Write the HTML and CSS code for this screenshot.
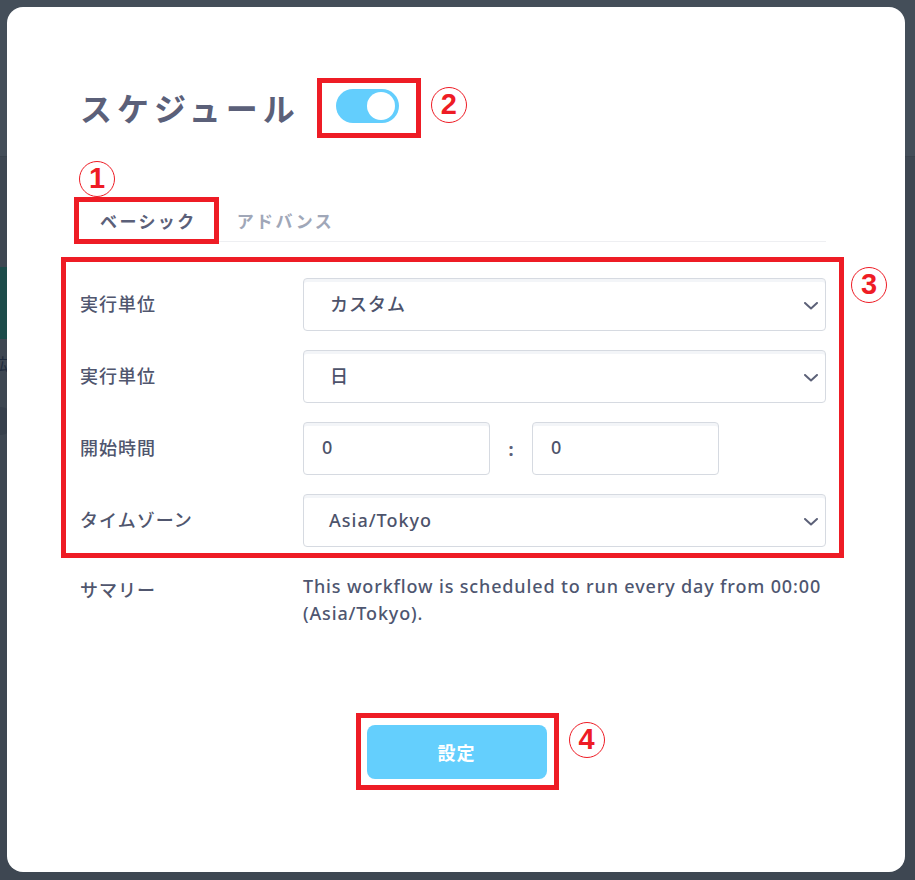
FILE: index.html
```html
<!DOCTYPE html>
<html lang="ja">
<head>
<meta charset="utf-8">
<title>スケジュール</title>
<link rel="stylesheet" href="styles.css">
</head>
<body>
<div class="page">
  <div class="page-header"></div>
  <div class="page-side">
    <div class="side-teal"></div>
    <div class="side-text">拡</div>
    <div class="side-dot"></div>
  </div>
</div>

<div class="modal">
  <div class="title-row">
    <h1 class="title">スケジュール</h1>
    <div class="toggle-mark">
      <div class="toggle"><span class="knob"></span></div>
      <span class="num num-2">2</span>
    </div>
  </div>

  <div class="tabs">
    <div class="tab active">ベーシック
      <span class="mark tab-mark"></span>
      <span class="num num-1">1</span>
    </div>
    <div class="tab">アドバンス</div>
  </div>

  <div class="form">
    <span class="mark form-mark"></span>
    <span class="num num-3">3</span>
    <div class="row">
      <div class="label">実行単位</div>
      <div class="select">カスタム<svg class="chev" viewBox="0 0 14 8"><path d="M1 1l6 5.5L13 1"/></svg></div>
    </div>
    <div class="row">
      <div class="label">実行単位</div>
      <div class="select">日<svg class="chev" viewBox="0 0 14 8"><path d="M1 1l6 5.5L13 1"/></svg></div>
    </div>
    <div class="row">
      <div class="label">開始時間</div>
      <div class="time">
        <div class="input">0</div>
        <span class="colon">:</span>
        <div class="input">0</div>
      </div>
    </div>
    <div class="row">
      <div class="label">タイムゾーン</div>
      <div class="select latin">Asia/Tokyo<svg class="chev" viewBox="0 0 14 8"><path d="M1 1l6 5.5L13 1"/></svg></div>
    </div>
  </div>

  <div class="summary">
    <div class="label summary-label">サマリー</div>
    <p class="summary-text">This workflow is scheduled to run every day from 00:00 (Asia/Tokyo).</p>
  </div>

  <div class="actions">
    <div class="btn-wrap">
      <button class="btn">設定</button>
      <span class="mark btn-mark"></span>
      <span class="num num-4">4</span>
    </div>
  </div>
</div>
</body>
</html>
```

FILE: styles.css
```css
* { box-sizing: border-box; }

html, body {
  margin: 0;
  padding: 0;
}

body {
  width: 915px;
  height: 880px;
  overflow: hidden;
  background: #3e4752;
  font-family: "Noto Sans", "Noto Sans CJK JP", sans-serif;
  position: relative;
}

/* backdrop page */
.page-header {
  height: 157px;
  background: #444e59;
  border-bottom: 1px solid #3a434d;
}
.page-side {
  display: flex;
  flex-direction: column;
  width: 20px;
}
.side-teal {
  margin-top: 110px;
  height: 72px;
  background: #1c4b4a;
  border-radius: 0 6px 6px 0;
}
.side-text {
  margin-top: 14px;
  margin-left: -8px;
  font-size: 16px;
  font-family: "Noto Sans CJK JP", sans-serif;
  color: #1e2a3c;
  line-height: 20px;
}
.side-dot {
  margin-top: 34px;
  margin-left: -14px;
  width: 28px;
  height: 28px;
  border-radius: 50%;
  background: #37404c;
}

/* modal */
.modal {
  position: absolute;
  top: 7px;
  left: 7px;
  width: 898px;
  height: 865px;
  background: #fff;
  border-radius: 16px;
  padding: 71px 79px 0 73px;
}

.title-row {
  display: flex;
  align-items: center;
  height: 60px;
}
.title {
  margin: 0;
  font-family: "Noto Sans CJK JP", sans-serif;
  font-size: 32px;
  font-weight: 700;
  letter-spacing: 5px;
  color: #5b6079;
  line-height: 40px;
  margin-top: -3px;
}
.toggle-mark {
  position: relative;
  flex: none;
  margin-left: 17px;
  width: 104px;
  height: 60px;
  border: 5px solid #ee1c25;
  padding: 6px 0 0 14px;
}
.toggle {
  width: 63px;
  height: 34px;
  border-radius: 17px;
  background: #63cefd;
  position: relative;
}
.knob {
  position: absolute;
  right: 4px;
  top: 3px;
  width: 28px;
  height: 28px;
  border-radius: 50%;
  background: #fff;
}

/* circled numbers */
.num {
  position: absolute;
  width: 36px;
  height: 36px;
  border: 1.5px solid #ee1c25;
  border-radius: 50%;
  color: #ee1c25;
  font-family: "Liberation Sans", sans-serif;
  font-weight: 700;
  font-size: 29px;
  line-height: 33px;
  text-align: center;
  letter-spacing: 0;
}
.num-2 { left: 109px; top: 4px; }
.num-1 { left: -1px; top: -41px; }
.num-3 { right: -61px; top: -11px; }
.num-4 { left: 202px; top: -3px; }

.mark {
  position: absolute;
  border: 5px solid #ee1c25;
  pointer-events: none;
}

/* tabs */
.tabs {
  display: flex;
  margin-top: 64px;
  border-bottom: 1px solid #eeeff2;
}
.tab {
  position: relative;
  padding: 9px 20px 10px;
  font-family: "Noto Sans CJK JP", sans-serif;
  font-size: 17px;
  font-weight: 700;
  letter-spacing: 2.4px;
  line-height: 20px;
  color: #a0a7b8;
}
.tab.active { color: #5b6079; }
.tab-mark {
  left: -6px;
  right: -2px;
  top: -5px;
  bottom: -3px;
}

/* form */
.form {
  position: relative;
  margin-top: 36px;
  display: flex;
  flex-direction: column;
  gap: 19px;
}
.form-mark {
  left: -19px;
  right: -18px;
  top: -21px;
  bottom: -11px;
}
.row {
  display: flex;
  align-items: center;
  height: 53px;
}
.label {
  width: 223px;
  flex: none;
  font-family: "Noto Sans CJK JP", sans-serif;
  font-size: 18px;
  font-weight: 500;
  letter-spacing: 1px;
  color: #50566e;
  padding-bottom: 4px;
}
.select, .input {
  height: 53px;
  border: 1px solid #d6dae1;
  border-radius: 4px;
  box-shadow: inset 0 3px 0 #f3f5f8;
  background: #fff;
  display: flex;
  align-items: center;
  font-family: "Noto Sans", "Noto Sans CJK JP", sans-serif;
  font-size: 18px;
  font-weight: 500;
  letter-spacing: 1px;
  color: #4d536b;
  padding-bottom: 3px;
}
.select {
  flex: 1;
  padding-left: 26px;
  position: relative;
}
.select.latin { padding-left: 25px; padding-bottom: 1px; }
.chev {
  position: absolute;
  right: 7px;
  top: 23px;
  width: 14px;
  height: 8px;
  fill: none;
  stroke: #5c6178;
  stroke-width: 2;
  stroke-linecap: round;
  stroke-linejoin: round;
}
.time {
  display: flex;
  align-items: center;
}
.input {
  width: 187px;
  padding-left: 18px;
}
.colon {
  width: 42px;
  text-align: center;
  font-size: 18px;
  font-weight: 700;
  color: #5c6178;
}

/* summary */
.summary {
  display: flex;
  margin-top: 26px;
}
.summary-label {
  padding-top: 3px;
  padding-bottom: 0;
  line-height: 27px;
}
.summary-text {
  margin: 0;
  font-family: "Noto Sans", sans-serif;
  font-size: 18px;
  font-weight: 500;
  letter-spacing: 0.85px;
  line-height: 27px;
  color: #4e5670;
  width: 530px;
}

/* actions */
.actions {
  display: flex;
  justify-content: center;
  margin-top: 98px;
  padding-left: 7px;
}
.btn-wrap {
  position: relative;
}
.btn {
  display: block;
  width: 180px;
  height: 54px;
  border: none;
  border-radius: 8px;
  background: #64cffd;
  color: #fff;
  font-family: "Noto Sans CJK JP", sans-serif;
  font-size: 18px;
  font-weight: 700;
  letter-spacing: 1px;
}
.btn-mark {
  left: -11px;
  right: -12px;
  top: -12px;
  bottom: -11px;
}
```
